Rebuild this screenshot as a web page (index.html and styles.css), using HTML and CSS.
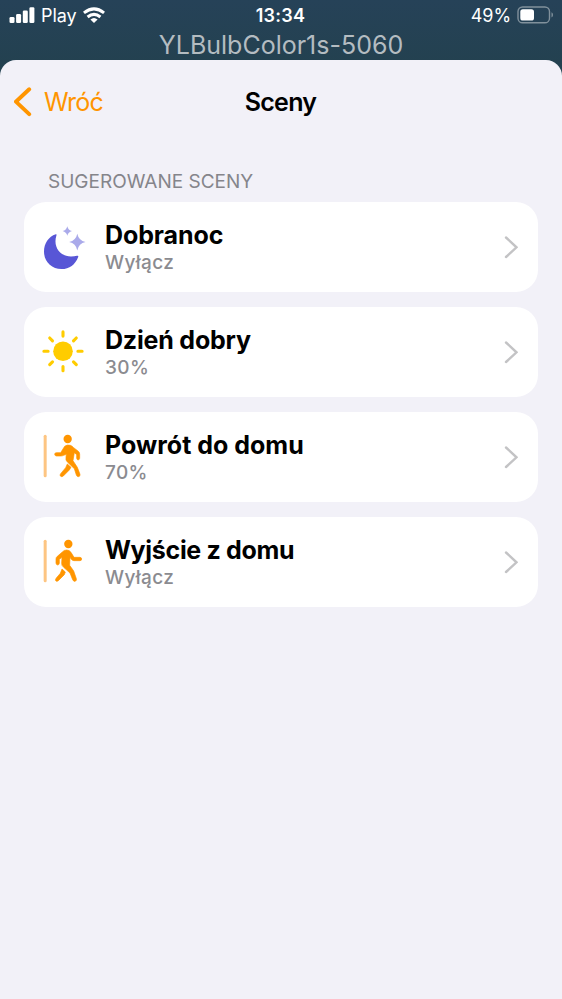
FILE: index.html
```html
<!DOCTYPE html>
<html lang="pl">
<head>
<meta charset="utf-8">
<title>Sceny</title>
<link rel="stylesheet" href="styles.css">
</head>
<body>
<header class="status">
  <div class="status-left">
    <svg class="signal" width="26" height="17" viewBox="0 0 26 17"><rect x="0.5" y="10" width="5" height="6" rx="1.3"/><rect x="7.1" y="7" width="5" height="9" rx="1.3"/><rect x="13.8" y="3.5" width="5" height="12.5" rx="1.3"/><rect x="20.4" y="0.2" width="5" height="15.8" rx="1.3"/></svg>
    <span class="carrier">Play</span>
    <svg class="wifi" width="22" height="17" viewBox="0 0 22 17"><path d="M0.9 5.9Q11-2.1 21.1 5.9"/><path d="M4.6 10Q11 4.9 17.4 10"/><path class="dot" d="M7.4 12.4Q11 9.4 14.6 12.4L11 16Z"/></svg>
  </div>
  <span class="clock">13:34</span>
  <div class="status-right">
    <span class="percent">49%</span>
    <svg width="37" height="18" viewBox="0 0 37 18"><rect class="shell" x="1" y="1" width="31.5" height="15.8" rx="4.6"/><rect x="3.3" y="3.2" width="13.7" height="11.3" rx="2.6" fill="#fff"/><path class="nub" d="M34.5 6.2Q36 7 36 8.9Q36 10.8 34.5 11.6Z"/></svg>
  </div>
</header>
<div class="device">YLBulbColor1s-5060</div>
<main class="sheet">
  <nav class="nav">
    <a class="back"><svg width="18" height="30" viewBox="0 0 18 30"><path d="M15.2 2.3L1.9 14.7L15.2 27.2"/></svg><span>Wróć</span></a>
    <h1>Sceny</h1>
  </nav>
  <h2>SUGEROWANE SCENY</h2>
  <section class="list">
    <article class="card">
      <svg class="icon" width="48" height="60" viewBox="0 0 48 60"><path fill="#5856d6" d="M15.8 17.2Q17 17 16.4 18.5C12.8 30 20 39.5 31 39.5Q34.5 39.5 37 38.8Q38.7 38.3 38.2 39.9C35.3 47.5 29.5 52 21.5 52C11.5 52 4 44.5 4 34.6C4 26.5 8.5 19.6 15.8 17.2Z"/><path class="stars" d="M27.3 9.2Q28.2 13.1 32 14Q28.2 14.9 27.3 18.8Q26.4 14.9 22.6 14Q26.4 13.1 27.3 9.2ZM37.3 16.8Q38.7 23.6 45.5 25Q38.7 26.4 37.3 33.4Q35.9 26.4 29.2 25Q35.9 23.6 37.3 16.8Z"/></svg>
      <div class="copy"><h3>Dobranoc</h3><p>Wyłącz</p></div>
      <svg class="chevron" width="14" height="24" viewBox="0 0 14 24"><path d="M2 2.5L12.5 12.3L2 22"/></svg>
    </article>
    <article class="card">
      <svg class="icon" width="48" height="60" viewBox="0 0 48 60"><circle cx="23" cy="29.3" r="9.8" fill="#ffcc00"/><path class="rays" d="M23 9.9V14.1M23 44.5V48.7M3.9 29.3H8.1M37.9 29.3H42.1M9.7 16L12.5 18.8M33.5 39.8L36.3 42.6M9.7 42.6L12.5 39.8M33.5 18.8L36.3 16"/></svg>
      <div class="copy"><h3 class="snug">Dzień dobry</h3><p>30%</p></div>
      <svg class="chevron" width="14" height="24" viewBox="0 0 14 24"><path d="M2 2.5L12.5 12.3L2 22"/></svg>
    </article>
    <article class="card">
      <svg class="icon" width="48" height="60" viewBox="0 0 48 60"><g transform="translate(-16 -15) scale(.33333)"><path class="door" d="M63.5 73V191"/><circle class="head" cx="131" cy="81" r="12.5"/><path class="body" d="M122 103Q129 97 139 100Q145 102 149 107L163 118Q167 121 167 126V139Q166 144 162 144Q158 143 158 138V128L151 122L147 146L160 166L168 187Q169 194 163 194Q159 194 157 189L151 170L130 150Q124 145 126 136L127 127L119 130Q115 132 110 132H97Q92 131 92 127Q92 122 97 122H110Z"/><path class="body" d="M130 156L141 166L136 174L118 192Q113 196 109 192Q107 189 110 185L125 167Z"/></g></svg>
      <div class="copy"><h3 class="wide">Powrót do domu</h3><p>70%</p></div>
      <svg class="chevron" width="14" height="24" viewBox="0 0 14 24"><path d="M2 2.5L12.5 12.3L2 22"/></svg>
    </article>
    <article class="card">
      <svg class="icon" width="48" height="60" viewBox="0 0 48 60"><g transform="translate(-16 -15) scale(.33333)"><path class="door" d="M63.5 73V191"/><circle class="head" cx="133" cy="81" r="12.5"/><path class="body" d="M115 105Q120 99 128 99Q136 99 141 106L150 121H168Q173 122 173 126Q173 131 168 131H150Q145 131 142 127L138 121L137 145L149 162L157 185Q159 191 153 193Q149 194 146 188L138 168L119 151Q112 146 113 138L114 121L106 127V139Q105 144 101 144Q96 143 96 138V126Q96 121 100 118Z"/><path class="body" d="M114 156L124 165L121 173L103 191Q98 195 95 191Q93 188 97 183L109 169Z"/></g></svg>
      <div class="copy"><h3 class="tight">Wyjście z domu</h3><p>Wyłącz</p></div>
      <svg class="chevron" width="14" height="24" viewBox="0 0 14 24"><path d="M2 2.5L12.5 12.3L2 22"/></svg>
    </article>
  </section>
</main>
</body>
</html>
```
FILE: styles.css
```css
* { box-sizing: border-box; }
body {
  margin: 0;
  height: 999px;
  display: flex;
  flex-direction: column;
  overflow: hidden;
  background: linear-gradient(#264258, #23414f 70px);
  font-family: Inter, "Liberation Sans", sans-serif;
}
h1, h2, h3, p { margin: 0; white-space: nowrap; }
svg { display: block; flex: none; }
.status {
  height: 30px;
  display: grid;
  grid-template-columns: 1fr auto 1fr;
  align-items: center;
  padding: 0 8px 0 9px;
  color: #fff;
  font-size: 18px;
  line-height: 28px;
}
.status span { padding-top: 2px; }
.status-left, .status-right { display: flex; align-items: center; }
.status-right { justify-content: flex-end; gap: 6px; }
.signal { fill: #fff; margin-right: 6px; }
.carrier { margin-right: 7px; letter-spacing: -0.1px; }
.wifi path { fill: none; stroke: #fff; stroke-width: 3.1; }
.wifi .dot { fill: #fff; stroke: none; }
.clock { font-weight: 600; letter-spacing: 0.3px; margin-right: 2px; }
.percent { letter-spacing: -0.1px; }
.shell { fill: none; stroke: #81919c; stroke-width: 1.4; }
.nub { fill: #81919c; }
.device {
  height: 30px;
  line-height: 30px;
  text-align: center;
  color: #b4bcc1;
  font-size: 25px;
}
.sheet {
  flex: 1;
  background: #f2f1f8;
  border-radius: 16px 16px 0 0;
}
.nav {
  height: 84px;
  display: grid;
  grid-template-columns: 1fr auto 1fr;
  align-items: center;
  padding-left: 14px;
}
.back {
  display: flex;
  align-items: center;
  gap: 12px;
  color: #ff9500;
  font-size: 25px;
  letter-spacing: -0.8px;
}
.back path { fill: none; stroke: #ff9500; stroke-width: 3.9; stroke-linecap: round; stroke-linejoin: round; }
.nav h1 { font-size: 25px; font-weight: 620; letter-spacing: -0.7px; margin-right: 15px; }
h2 {
  height: 58px;
  padding: 27px 0 0 48px;
  line-height: 22px;
  font-size: 19px;
  font-weight: 400;
  color: #85858b;
}
.list { display: flex; flex-direction: column; gap: 15px; padding: 0 24px; }
.card {
  height: 90px;
  display: flex;
  align-items: center;
  padding: 0 20px 0 16px;
  background: #fff;
  border-radius: 22px;
}
.copy { flex: 1; margin-left: 17px; padding-top: 1px; }
h3 { font-size: 25px; line-height: 28px; margin-bottom: 2px; font-weight: 650; color: #000; letter-spacing: -0.1px; }
.copy p { font-size: 19px; line-height: 24px; font-weight: 500; color: #8b8b90; letter-spacing: 0.4px; }
.snug { letter-spacing: -0.2px; }
.wide { letter-spacing: 0; }
.tight { letter-spacing: -0.32px; }
.chevron path { fill: none; stroke: #c3c3c5; stroke-width: 2.4; stroke-linecap: round; stroke-linejoin: miter; }
.stars { fill: #aaaaea; }
.rays { fill: none; stroke: #ffcc00; stroke-width: 3.1; stroke-linecap: round; }
.door { fill: none; stroke: #fdc582; stroke-width: 9; stroke-linecap: round; }
.head { fill: #ff9500; }
.body { fill: #ff9500; stroke: #ff9500; stroke-width: 2; stroke-linejoin: round; }
```
